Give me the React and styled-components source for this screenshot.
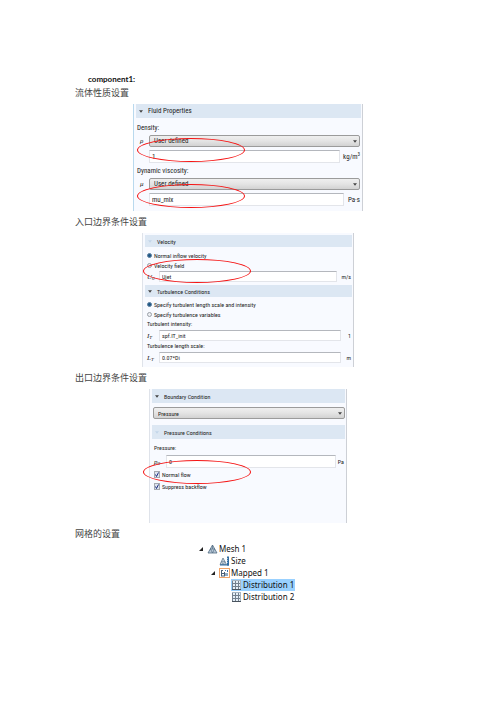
import React from "react";
import styled, { createGlobalStyle, css } from "styled-components";

const GlobalStyle = createGlobalStyle`
  * {
    box-sizing: border-box;
  }

  body {
    margin: 0;
    background: #fff;
    color: #222;
    font-family: "Liberation Sans Narrow", "Roboto Condensed", Lato, sans-serif;
    font-size: 7px;
  }
`;

const Page = styled.main`
  padding: 73px 75px;
`;

const Title = styled.h1`
  margin: 0;
  padding-left: 13px;
  font: 700 8px/13px Lato, sans-serif;
  color: #111;
`;

const Heading = styled.h2`
  margin: 0;
  font: 400 9px/13px "Noto Sans CJK SC", sans-serif;
  color: #444;
`;

const Panel = styled.form`
  position: relative;
  margin: 5px ${(p) => p.$inset}px 4px;
  padding: ${(p) => p.$top || 0}px 1px 0 2px;
  border-left: 1px solid ${(p) => p.$edge || "#dfe3ea"};
  border-right: 1px solid #cdd0d6;
  background: #f8faff;
  font-size: ${(p) => (p.$dense ? 6 : 7)}px;
`;

const Bar = styled.h3`
  display: flex;
  align-items: center;
  gap: 5px;
  height: ${(p) => (p.$small ? 12 : 14)}px;
  margin: 0;
  padding-left: 3px;
  background: #dce7f3;
  font-size: inherit;
  font-weight: 400;

  svg {
    width: 4px;
    height: 3px;
  }
`;

const Body = styled.div`
  padding: ${(p) => p.$pad};
`;

const Caption = styled.label`
  display: block;
  height: ${(p) => (p.$tall ? 10 : 8)}px;
  line-height: ${(p) => (p.$tall ? 10 : 8)}px;
`;

const Field = styled.div`
  display: flex;
  align-items: center;
  margin-top: ${(p) => p.$gap || 3}px;
`;

const Symbol = styled.label`
  flex: none;
  width: 12px;
  padding-left: ${(p) => (p.$indent ? 3 : 0)}px;
  font: italic 7px "Liberation Serif", serif;

  sub {
    font-size: 5px;
    line-height: 1;
    vertical-align: -1px;
  }
`;

const Unit = styled.span`
  flex: none;
  width: ${(p) => p.$width}px;
  text-align: right;
  line-height: 8px;

  sup {
    font-size: 5px;
    line-height: 1;
    vertical-align: 3px;
  }
`;

const control = css`
  flex: 1;
  min-width: 0;
  width: 100%;
  margin: 0;
  color: #222;
  font: inherit;
  outline: none;
`;

const TextBox = styled.input`
  ${control}
  height: ${(p) => (p.$small ? 11 : 13)}px;
  padding: 0 2px;
  border: 1px solid #e3e5ea;
  border-top-color: #b4b7bd;
  background: #fff;
`;

const SelectWrap = styled.div`
  position: relative;
  display: flex;
  flex: 1;

  svg {
    position: absolute;
    top: 5px;
    right: 3px;
    width: 4px;
    height: 3px;
    pointer-events: none;
  }
`;

const Select = styled.select`
  ${control}
  height: 12px;
  padding: 0 4px;
  border: 1px solid #9b9b9b;
  border-radius: 2px;
  background: linear-gradient(#efefef, #e4e4e4 50%, #d2d2d2);
  appearance: none;
`;

const Choice = styled.label`
  display: flex;
  align-items: center;
  gap: 2px;
  height: ${(p) => (p.$tall ? 12 : 10)}px;
`;

const Radio = styled.input`
  appearance: none;
  width: 5px;
  height: 5px;
  margin: 0;
  border: 1px solid #9aa0a8;
  border-radius: 50%;
  background: #eceef2;

  &:checked {
    border-color: #5c7f9e;
    background: #1d5686;
  }
`;

const Check = styled.span`
  position: relative;
  display: flex;

  input {
    appearance: none;
    width: 6px;
    height: 7px;
    margin: 0;
    border: 1px solid #a4a8b0;
    background: #dde3ee;
  }

  svg {
    position: absolute;
    inset: 1px;
    width: 4px;
    height: 5px;
  }
`;

const Ring = styled.span`
  position: absolute;
  top: ${(p) => p.$top}px;
  left: ${(p) => p.$left}px;
  width: 108px;
  height: 24px;
  border: 1px solid #f51414;
  border-radius: 50%;
  pointer-events: none;
`;

const Tree = styled.ul`
  margin: 3px 0 0 123px;
  padding: 0;
  list-style: none;
  font: 8px/12px "Noto Sans", sans-serif;
  color: #111;
`;

const Node = styled.li`
  display: flex;
  align-items: center;
  height: 12px;
  padding-left: ${(p) => p.$depth * 12}px;
`;

const NodeLabel = styled.span`
  display: flex;
  align-items: center;
  gap: 1px;
  height: 12px;
  padding: 0 1px 0 0;
  background: ${(p) => (p.$selected ? "#99d1ff" : "transparent")};

  svg {
    width: 11px;
    height: 10px;
  }
`;

const Twist = styled.span`
  display: flex;
  width: 9px;
  padding-left: 1px;

  svg {
    width: 4px;
    height: 4px;
  }
`;

function DownArrow({ color = "#444" }) {
  return (
    <svg viewBox="0 0 6 4" aria-hidden="true">
      <path d="M0 0h6L3 4z" fill={color} />
    </svg>
  );
}

function Toggle({ open }) {
  return (
    <Twist>
      {open && (
        <svg viewBox="0 0 5 5" aria-hidden="true">
          <path d="M5 0v5H0z" fill="#222" />
        </svg>
      )}
    </Twist>
  );
}

function MeshIcon() {
  return (
    <svg viewBox="0 0 20 20" aria-hidden="true">
      <path d="M10 2 19 18H1z" fill="#b9c9d8" stroke="#4f6980" strokeWidth="1.6" />
      <path d="M5 10h10M10 18l-4-8M10 18l4-8M10 2v8" fill="none" stroke="#4f6980" strokeWidth="1.3" />
    </svg>
  );
}

function SizeIcon() {
  return (
    <svg viewBox="0 0 20 20" aria-hidden="true">
      <path d="M7 4 14 17H1z" fill="#c5d2de" stroke="#5c7488" strokeWidth="1.5" />
      <path d="M4 11h7M7 17l-3-6M7 17l4-6" fill="none" stroke="#5c7488" />
      <path d="M15 1h4v18h-4z" fill="#2f6da3" />
      <path d="M1 18h18" stroke="#2f6da3" strokeWidth="2" />
      <path d="M15 5h2M15 9h2M15 13h2" stroke="#fff" />
    </svg>
  );
}

function MappedIcon() {
  return (
    <svg viewBox="0 0 11 10" aria-hidden="true">
      <rect x="0.5" y="0.5" width="10" height="9" fill="#fff" stroke="#f0a468" />
      <path d="M2.5 2v6M2 2.5h2M2 5.5h3M5.5 4v4M2 8h4" fill="none" stroke="#4a6078" />
      <path d="M6 5h3v3H6z" fill="#8fa9c2" />
      <path d="M6 2.5h1M8.5 2v2" fill="none" stroke="#3f74b0" />
    </svg>
  );
}

function GridIcon() {
  return (
    <svg viewBox="0 0 11 10" aria-hidden="true">
      <rect x="1" y="0" width="9" height="9" fill="#e6eff7" />
      <path d="M1.5 0v9M4.500 0v9M7.500 0v9M1 3.500h9M1 6.500h9" stroke="#74818e" />
      <path d="M1 .5h9M9.500 0v9" stroke="#a9b6c2" />
      <path d="M1 9.500h9" stroke="#4a545e" />
    </svg>
  );
}

function DropDown({ label, value }) {
  return (
    <SelectWrap>
      <Select aria-label={label} defaultValue={value}>
        <option>{value}</option>
      </Select>
      <DownArrow />
    </SelectWrap>
  );
}

function CheckRow({ children }) {
  return (
    <Choice $tall>
      <Check>
        <input type="checkbox" defaultChecked />
        <svg viewBox="0 0 8 10" aria-hidden="true">
          <path d="M1 5 3 9 7 1" fill="none" stroke="#1c2f80" strokeWidth="2" />
        </svg>
      </Check>
      {children}
    </Choice>
  );
}

const nodes = [
  { text: "Mesh 1", depth: 0, icon: MeshIcon, open: true },
  { text: "Size", depth: 1, icon: SizeIcon },
  { text: "Mapped 1", depth: 1, icon: MappedIcon, open: true },
  { text: "Distribution 1", depth: 2, icon: GridIcon, selected: true },
  { text: "Distribution 2", depth: 2, icon: GridIcon },
];

export default function App() {
  return (
    <Page lang="zh-CN">
      <GlobalStyle />
      <Title>component1:</Title>
      <Heading>流体性质设置</Heading>
      <Panel $inset={58} $edge="#b9d9ee">
        <Bar>
          <DownArrow />
          Fluid Properties
        </Bar>
        <Body $pad="6px 1px 5px 1px">
          <Caption htmlFor="density">Density:</Caption>
          <Field>
            <Symbol $indent htmlFor="density">ρ</Symbol>
            <DropDown label="Density source" value="User defined" />
          </Field>
          <Field>
            <Symbol as="span" />
            <TextBox id="density" defaultValue="1" />
            <Unit $width={20}>
              kg/m<sup>3</sup>
            </Unit>
          </Field>
          <Field $gap={4}>
            <Caption htmlFor="viscosity">Dynamic viscosity:</Caption>
          </Field>
          <Field>
            <Symbol $indent htmlFor="viscosity">μ</Symbol>
            <DropDown label="Viscosity source" value="User defined" />
          </Field>
          <Field>
            <Symbol as="span" />
            <TextBox id="viscosity" defaultValue="mu_mix" />
            <Unit $width={16}>Pa·s</Unit>
          </Field>
        </Body>
        <Ring $top={34} $left={3} />
        <Ring $top={80} $left={3} />
      </Panel>

      <Heading>入口边界条件设置</Heading>
      <Panel $dense $inset={67} $top={2}>
        <Bar $small>
          <DownArrow color="#c3d6ea" />
          Velocity
        </Bar>
        <Body $pad="3px 1px 3px 2px">
          <Choice>
            <Radio type="radio" name="inflow" defaultChecked />
            Normal inflow velocity
          </Choice>
          <Choice>
            <Radio type="radio" name="inflow" />
            Velocity field
          </Choice>
          <Field $gap={1}>
            <Symbol htmlFor="inlet">
              U<sub>0</sub>
            </Symbol>
            <TextBox $small id="inlet" defaultValue="Ujet" />
            <Unit $width={14}>m/s</Unit>
          </Field>
        </Body>
        <Bar $small>
          <DownArrow />
          Turbulence Conditions
        </Bar>
        <Body $pad="2px 1px 4px 2px">
          <Choice>
            <Radio type="radio" name="turbulence" defaultChecked />
            Specify turbulent length scale and intensity
          </Choice>
          <Choice>
            <Radio type="radio" name="turbulence" />
            Specify turbulence variables
          </Choice>
          <Caption $tall htmlFor="intensity">Turbulent intensity:</Caption>
          <Field $gap={1}>
            <Symbol htmlFor="intensity">
              I<sub>T</sub>
            </Symbol>
            <TextBox $small id="intensity" defaultValue="spf.IT_init" />
            <Unit $width={10}>1</Unit>
          </Field>
          <Caption $tall htmlFor="length">Turbulence length scale:</Caption>
          <Field $gap={1}>
            <Symbol htmlFor="length">
              L<sub>T</sub>
            </Symbol>
            <TextBox $small id="length" defaultValue="0.07*Di" />
            <Unit $width={10}>m</Unit>
          </Field>
        </Body>
        <Ring $top={26} $left={0} />
      </Panel>

      <Heading>出口边界条件设置</Heading>
      <Panel $dense $inset={74}>
        <Bar>
          <DownArrow />
          Boundary Condition
        </Bar>
        <Body $pad="4px 0 6px 1px">
          <DropDown label="Boundary condition" value="Pressure" />
        </Body>
        <Bar>
          <DownArrow color="#c3d6ea" />
          Pressure Conditions
        </Bar>
        <Body $pad="5px 1px 31px 2px">
          <Caption htmlFor="pressure">Pressure:</Caption>
          <Field>
            <Symbol htmlFor="pressure">
              p<sub>0</sub>
            </Symbol>
            <TextBox id="pressure" defaultValue="0" />
            <Unit $width={8}>Pa</Unit>
          </Field>
          <CheckRow>Normal flow</CheckRow>
          <CheckRow>Suppress backflow</CheckRow>
        </Body>
        <Ring $top={71} $left={-7} />
      </Panel>

      <Heading>网格的设置</Heading>
      <Tree>
        {nodes.map(({ text, depth, icon: Icon, open, selected }) => (
          <Node key={text} $depth={depth}>
            <Toggle open={open} />
            <NodeLabel $selected={selected}>
              <Icon />
              {text}
            </NodeLabel>
          </Node>
        ))}
      </Tree>
    </Page>
  );
}
